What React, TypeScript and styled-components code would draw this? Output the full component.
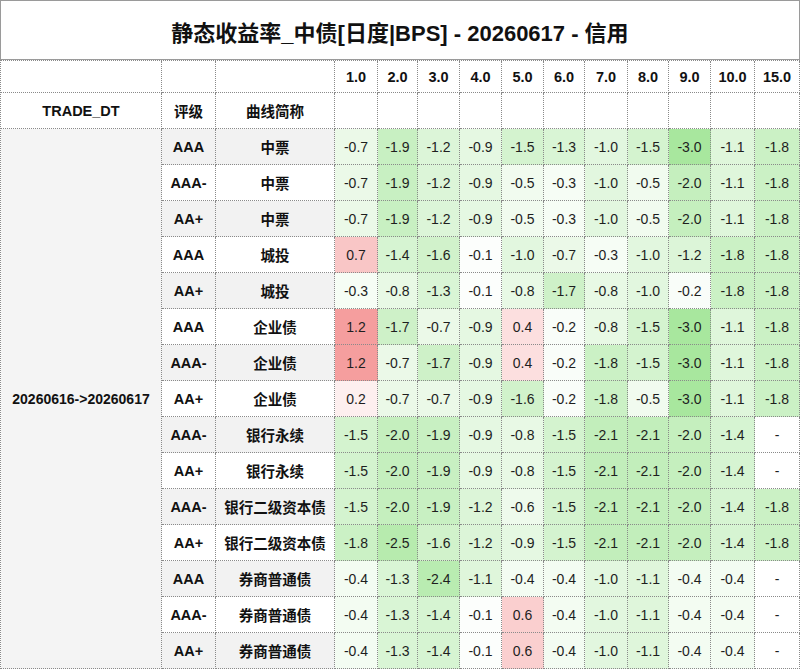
import React from "react";
import styled, { createGlobalStyle } from "styled-components";

const GlobalStyle = createGlobalStyle`
  html, body { margin: 0; padding: 0; background: #ffffff; }
  body { font-family: "Liberation Sans", "Noto Sans CJK SC", Arial, sans-serif; }
`;

const tenors = ["1.0", "2.0", "3.0", "4.0", "5.0", "6.0", "7.0", "8.0", "9.0", "10.0", "15.0"];

type Row = { rating: string; curve: string; values: (number | null)[] };

const rows: Row[] = [
  { rating: "AAA", curve: "中票", values: [-0.7, -1.9, -1.2, -0.9, -1.5, -1.3, -1.0, -1.5, -3.0, -1.1, -1.8] },
  { rating: "AAA-", curve: "中票", values: [-0.7, -1.9, -1.2, -0.9, -0.5, -0.3, -1.0, -0.5, -2.0, -1.1, -1.8] },
  { rating: "AA+", curve: "中票", values: [-0.7, -1.9, -1.2, -0.9, -0.5, -0.3, -1.0, -0.5, -2.0, -1.1, -1.8] },
  { rating: "AAA", curve: "城投", values: [0.7, -1.4, -1.6, -0.1, -1.0, -0.7, -0.3, -1.0, -1.2, -1.8, -1.8] },
  { rating: "AA+", curve: "城投", values: [-0.3, -0.8, -1.3, -0.1, -0.8, -1.7, -0.8, -1.0, -0.2, -1.8, -1.8] },
  { rating: "AAA", curve: "企业债", values: [1.2, -1.7, -0.7, -0.9, 0.4, -0.2, -0.8, -1.5, -3.0, -1.1, -1.8] },
  { rating: "AAA-", curve: "企业债", values: [1.2, -0.7, -1.7, -0.9, 0.4, -0.2, -1.8, -1.5, -3.0, -1.1, -1.8] },
  { rating: "AA+", curve: "企业债", values: [0.2, -0.7, -0.7, -0.9, -1.6, -0.2, -1.8, -0.5, -3.0, -1.1, -1.8] },
  { rating: "AAA-", curve: "银行永续", values: [-1.5, -2.0, -1.9, -0.9, -0.8, -1.5, -2.1, -2.1, -2.0, -1.4, null] },
  { rating: "AA+", curve: "银行永续", values: [-1.5, -2.0, -1.9, -0.9, -0.8, -1.5, -2.1, -2.1, -2.0, -1.4, null] },
  { rating: "AAA-", curve: "银行二级资本债", values: [-1.5, -2.0, -1.9, -1.2, -0.6, -1.5, -2.1, -2.1, -2.0, -1.4, -1.8] },
  { rating: "AA+", curve: "银行二级资本债", values: [-1.8, -2.5, -1.6, -1.2, -0.9, -1.5, -2.1, -2.1, -2.0, -1.4, -1.8] },
  { rating: "AAA", curve: "券商普通债", values: [-0.4, -1.3, -2.4, -1.1, -0.4, -0.4, -1.0, -1.1, -0.4, -0.4, null] },
  { rating: "AAA-", curve: "券商普通债", values: [-0.4, -1.3, -1.4, -0.1, 0.6, -0.4, -1.0, -1.1, -0.4, -0.4, null] },
  { rating: "AA+", curve: "券商普通债", values: [-0.4, -1.3, -1.4, -0.1, 0.6, -0.4, -1.0, -1.1, -0.4, -0.4, null] },
];

const heat = (v: number | null): string => {
  if (v === null) return "#ffffff";
  if (v >= 0) {
    const t = Math.min(v / 1.2, 1);
    const r = Math.round(255 - t * 10);
    const g = Math.round(255 - t * 97);
    const b = Math.round(255 - t * 97);
    return `rgb(${r},${g},${b})`;
  }
  const t = Math.min(-v / 3.0, 1);
  const r = Math.round(255 - t * 87);
  const g = Math.round(255 - t * 24);
  const b = Math.round(255 - t * 97);
  return `rgb(${r},${g},${b})`;
};

const Page = styled.div`
  width: 800px;
  height: 669px;
  overflow: hidden;
  background: #ffffff;
`;

const Title = styled.h1`
  margin: 0;
  box-sizing: border-box;
  height: 60px;
  border: 1px solid #9a9a9a;
  display: flex;
  align-items: center;
  justify-content: center;
  font-size: 22px;
  font-weight: 700;
  color: #111111;
  letter-spacing: 0;
  padding-top: 2px;
`;

const Grid = styled.div`
  display: grid;
  grid-template-columns: 161px 54px 119px 43px 40px 42px 42px 42px 41px 43px 41px 42px 44px 45px;
  grid-template-rows: 32px 36px repeat(15, 36px);
  border-left: 1px dotted #8a8a8a;
  border-top: 1px dotted #8a8a8a;
  width: 800px;
  box-sizing: border-box;
`;

const Cell = styled.div<{ $bg?: string; $bold?: boolean }>`
  box-sizing: border-box;
  border-right: 1px dotted #8a8a8a;
  border-bottom: 1px dotted #8a8a8a;
  background: ${(p) => p.$bg ?? "#ffffff"};
  display: flex;
  align-items: center;
  justify-content: center;
  font-size: ${(p) => (p.$bold ? "14.5px" : "14px")};
  font-weight: ${(p) => (p.$bold ? 700 : 400)};
  color: ${(p) => (p.$bold ? "#111111" : "#1e1e1e")};
  white-space: nowrap;
  overflow: hidden;
`;

const DateCell = styled(Cell)`
  grid-row: 3 / span 15;
  grid-column: 1;
  background: #f4f4f4;
  font-size: 14px;
`;

const RatingCell = styled(Cell)`
  grid-column: 2;
`;

const ValueCell = styled(Cell)<{ $value: number | null }>`
  background: ${(p) => heat(p.$value)};
`;

export default function App() {
  return (
    <Page>
      <GlobalStyle />
      <Title>静态收益率_中债[日度|BPS] - 20260617 - 信用</Title>
      <Grid>
        <Cell />
        <Cell />
        <Cell />
        {tenors.map((t) => (
          <Cell key={`t${t}`} $bold>
            {t}
          </Cell>
        ))}
        <Cell $bold>TRADE_DT</Cell>
        <Cell $bold>评级</Cell>
        <Cell $bold>曲线简称</Cell>
        {tenors.map((t) => (
          <Cell key={`e${t}`} />
        ))}
        <DateCell $bold>20260616-&gt;20260617</DateCell>
        {rows.map((r, i) => {
          const bg = i % 2 === 0 ? "#f2f2f2" : "#ffffff";
          return (
            <React.Fragment key={i}>
              <RatingCell $bold $bg={bg}>
                {r.rating}
              </RatingCell>
              <Cell $bold $bg={bg}>
                {r.curve}
              </Cell>
              {r.values.map((v, j) => (
                <ValueCell key={j} $value={v}>
                  {v === null ? "-" : v.toFixed(1)}
                </ValueCell>
              ))}
            </React.Fragment>
          );
        })}
      </Grid>
    </Page>
  );
}
